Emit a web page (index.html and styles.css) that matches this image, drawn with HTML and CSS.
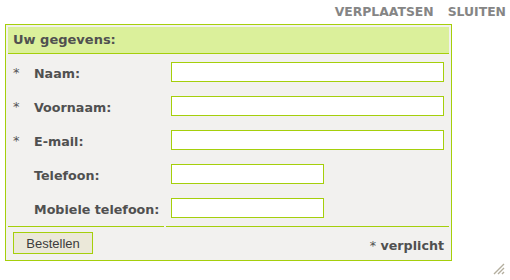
FILE: index.html
```html
<!DOCTYPE html>
<html lang="nl">
<head>
<meta charset="utf-8">
<title>Uw gegevens</title>
<link rel="stylesheet" href="styles.css">
</head>
<body>
<div class="topbar">
  <a class="toplink" href="#">VERPLAATSEN</a>
  <a class="toplink" href="#">SLUITEN</a>
</div>
<form class="panel">
  <div class="panel-head">Uw gegevens:</div>
  <div class="rows">
    <div class="row"><span class="star">*</span><label class="lbl" for="f1">Naam:</label><input class="field" id="f1" type="text"></div>
    <div class="row"><span class="star">*</span><label class="lbl" for="f2">Voornaam:</label><input class="field" id="f2" type="text"></div>
    <div class="row"><span class="star">*</span><label class="lbl" for="f3">E-mail:</label><input class="field" id="f3" type="text"></div>
    <div class="row"><span class="star"></span><label class="lbl" for="f4">Telefoon:</label><input class="field short" id="f4" type="text"></div>
    <div class="row"><span class="star"></span><label class="lbl" for="f5">Mobiele telefoon:</label><input class="field short" id="f5" type="text"></div>
  </div>
  <div class="footer">
    <div class="foot-cell"><button class="btn" type="button">Bestellen</button></div>
    <div class="foot-cell right"><span class="req-star">*</span> verplicht</div>
  </div>
</form>
<svg class="grip" width="12" height="12" viewBox="0 0 12 12">
  <path d="M11 1 L1 11 M11 5 L5 11 M11 9 L9 11" stroke="#b3ae9e" stroke-width="1.4" fill="none"/>
</svg>
</body>
</html>
```
FILE: styles.css
```css
html, body {
  margin: 0;
  padding: 0;
  background: #ffffff;
}
body {
  font-family: "DejaVu Sans", Verdana, sans-serif;
  color: #505050;
  width: 510px;
  height: 280px;
  position: relative;
  overflow: hidden;
}
.topbar {
  display: flex;
  justify-content: flex-end;
  gap: 14px;
  height: 24px;
  box-sizing: border-box;
  padding: 5px 4px 0 0;
}
.toplink {
  font-size: 12.4px;
  font-weight: bold;
  line-height: 14px;
  color: #858585;
  text-decoration: none;
}
.panel {
  margin: 0 0 0 5px;
  width: 447px;
  box-sizing: border-box;
  border: 1px solid #a5cf0b;
  padding: 2px;
  background: #f2f1ef;
}
.panel-head {
  height: 26px;
  line-height: 26px;
  background: #dbf09b;
  border-bottom: 1px solid #a5cf0b;
  padding-left: 5px;
  font-size: 13px;
  font-weight: bold;
  color: #505050;
}
.rows {
  display: flex;
  flex-direction: column;
  gap: 14px;
  padding: 8px 0 8px 5px;
}
.row {
  display: grid;
  grid-template-columns: 21px 137px auto;
  align-items: center;
  height: 20px;
}
.star {
  font-size: 13px;
  line-height: 15px;
  color: #555555;
}
.lbl {
  font-size: 12.7px;
  font-weight: bold;
  line-height: 15px;
  color: #505050;
  padding-top: 2px;
}
.field {
  width: 273px;
  height: 20px;
  box-sizing: border-box;
  border: 1px solid #a5cf0b;
  background: #ffffff;
  margin: 0;
  padding: 0 2px;
  font: 12px "DejaVu Sans", sans-serif;
}
.field.short {
  width: 153px;
}
.footer {
  display: grid;
  grid-template-columns: 156px 1fr;
  column-gap: 2px;
}
.foot-cell {
  border-top: 1px solid #a5cf0b;
  height: 32px;
  box-sizing: border-box;
  padding: 5px 0 0 5px;
}
.foot-cell.right {
  display: flex;
  justify-content: flex-end;
  align-items: center;
  padding: 5px 5px 0 0;
  font-size: 12.7px;
  font-weight: bold;
  color: #505050;
  white-space: pre;
}
.req-star {
  font-weight: normal;
}
.btn {
  width: 80px;
  height: 22px;
  box-sizing: border-box;
  border: 1px solid #a5cf0b;
  background: #ebe8d9;
  color: #3c3c3c;
  font: 13px "Liberation Sans", Arial, sans-serif;
  padding: 0;
  margin: 0;
}
.grip {
  position: absolute;
  right: 5px;
  bottom: 5px;
}
```
